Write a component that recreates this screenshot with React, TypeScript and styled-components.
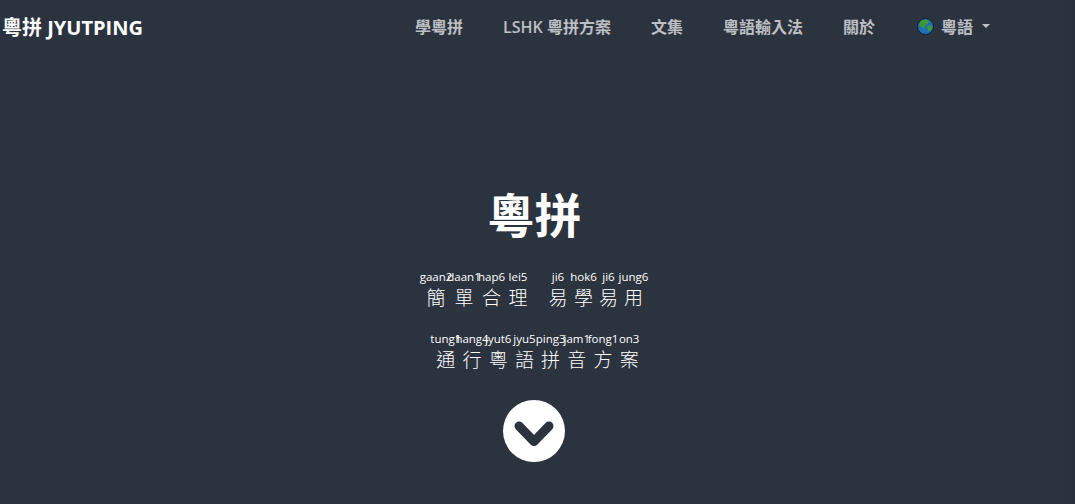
import React from 'react';
import styled, {createGlobalStyle} from 'styled-components';

const GlobalStyle = createGlobalStyle`
  html, body {
    margin: 0;
    padding: 0;
    height: 100%;
    overflow: hidden;
    background: #2b333f;
  }
  body {
    font-family: "Open Sans", "Noto Sans CJK TC", sans-serif;
  }
`;

const Page = styled.div`
  height: 504px;
  display: flex;
  flex-direction: column;
  background: linear-gradient(to right, #2b333f 0, #2b333f 1061px, #28303b 1075px);
`;

const Navbar = styled.nav`
  height: 52px;
  flex: none;
  display: flex;
  align-items: center;
  justify-content: space-between;
  padding: 0 85px 0 2px;
`;

const Brand = styled.a`
  font-size: 20px;
  font-weight: 700;
  color: #fff;
`;

const NavList = styled.div`
  display: flex;
  align-items: center;
  gap: 40px;
`;

const NavLink = styled.a`
  font-size: 16px;
  font-weight: 600;
  color: rgba(255, 255, 255, 0.7);
  white-space: nowrap;
`;

const LangToggle = styled(NavLink)`
  display: flex;
  align-items: center;
  margin-left: 2px;
`;

const Globe = styled.svg`
  width: 17px;
  height: 17px;
  margin-right: 7px;
`;

const Caret = styled.span`
  width: 0;
  height: 0;
  margin-left: 9px;
  border-top: 4px solid rgba(255, 255, 255, 0.7);
  border-left: 4.5px solid transparent;
  border-right: 4.5px solid transparent;
`;

const Hero = styled.main`
  display: flex;
  flex-direction: column;
  align-items: center;
  padding-top: 132px;
`;

const Title = styled.h1`
  margin: 0 6px 23px 0;
  font-size: 47px;
  line-height: 62px;
  font-weight: 700;
  color: #fff;
`;

const Tagline = styled.div`
  display: flex;
  margin-bottom: 19px;
`;

const Syllable = styled.span<{$width: number}>`
  width: ${p => p.$width}px;
  display: flex;
  flex-direction: column;
  align-items: center;
  color: #fff;
`;

const Reading = styled.span`
  font-size: 11.5px;
  line-height: 15px;
  white-space: nowrap;
`;

const Hanzi = styled.span`
  font-size: 19px;
  font-weight: 300;
  line-height: 28px;
`;

const Spacer = styled.span<{$width: number}>`
  width: ${p => p.$width}px;
`;

const ScrollButton = styled.a`
  width: 62px;
  height: 62px;
  margin: 7px 7px 0 0;
  border-radius: 50%;
  background: #fff;
  display: flex;
  align-items: center;
  justify-content: center;
`;

const Chevron = styled.svg`
  width: 40px;
  height: 26px;
  margin-top: 5px;
`;

type Item = {hanzi?: string, reading?: string, width: number};

const first: Item[] = [
  {hanzi: '簡', reading: 'gaan2', width: 28},
  {hanzi: '單', reading: 'daan1', width: 28},
  {hanzi: '合', reading: 'hap6', width: 27},
  {hanzi: '理', reading: 'lei5', width: 26},
  {width: 14},
  {hanzi: '易', reading: 'ji6', width: 26},
  {hanzi: '學', reading: 'hok6', width: 25},
  {hanzi: '易', reading: 'ji6', width: 25},
  {hanzi: '用', reading: 'jung6', width: 25},
  {width: 7},
];

const second: Item[] = [
  {hanzi: '通', reading: 'tung1', width: 26.2},
  {hanzi: '行', reading: 'hang4', width: 26.2},
  {hanzi: '粵', reading: 'jyut6', width: 26.2},
  {hanzi: '語', reading: 'jyu5', width: 26.2},
  {hanzi: '拼', reading: 'ping3', width: 26.2},
  {hanzi: '音', reading: 'jam1', width: 26.2},
  {hanzi: '方', reading: 'fong1', width: 26.2},
  {hanzi: '案', reading: 'on3', width: 26.2},
];

const Line = ({items}: {items: Item[]}) => (
  <Tagline>
    {items.map((item, i) =>
      item.hanzi ? (
        <Syllable key={i} $width={item.width}>
          <Reading>{item.reading}</Reading>
          <Hanzi>{item.hanzi}</Hanzi>
        </Syllable>
      ) : <Spacer key={i} $width={item.width}/>
    )}
  </Tagline>
);

const App = () => (
  <Page>
    <GlobalStyle/>
    <Navbar>
      <Brand>粵拼 JYUTPING</Brand>
      <NavList>
        <NavLink>學粵拼</NavLink>
        <NavLink>LSHK 粵拼方案</NavLink>
        <NavLink>文集</NavLink>
        <NavLink>粵語輸入法</NavLink>
        <NavLink>關於</NavLink>
        <LangToggle>
          <Globe viewBox="0 0 17 17">
            <circle cx="8.5" cy="8.5" r="8" fill="#1f6fb5" stroke="#10202c" strokeWidth="1"/>
            <path d="M4 2.5 L9 1.6 L12 3 L10.5 6 L8 7 L7.5 10.5 L5 9.5 L2 7 Z" fill="#3c9a2e"/>
            <path d="M10 8 L14 7.5 L15.5 10 L13 13.5 L10.5 12 Z" fill="#3c9a2e"/>
          </Globe>
          粵語
          <Caret/>
        </LangToggle>
      </NavList>
    </Navbar>
    <Hero>
      <Title>粵拼</Title>
      <Line items={first}/>
      <Line items={second}/>
      <ScrollButton>
        <Chevron viewBox="0 0 40 26">
          <path d="M5 5 L20 20.5 L35 5" fill="none" stroke="#2b333f" strokeWidth="9" strokeLinecap="round" strokeLinejoin="round"/>
        </Chevron>
      </ScrollButton>
    </Hero>
  </Page>
);

export default App;
